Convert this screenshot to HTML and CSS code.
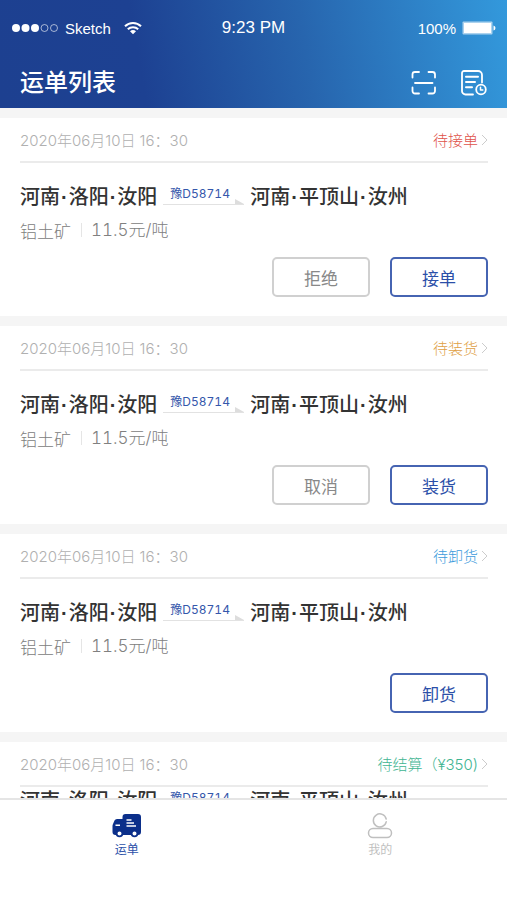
FILE: index.html
```html
<!DOCTYPE html>
<html lang="zh-CN">
<head>
    <meta charset="UTF-8">
    <meta name="viewport" content="width=device-width, initial-scale=1.0">
    <title>运单列表</title>
    <link rel="stylesheet" href="styles.css">
</head>
<body>
    <header class="header">
        <div class="status-bar">
            <div class="status-left">
                <svg class="signal" width="48" height="10" viewBox="0 0 48 10" fill="none" stroke="#fff">
                    <circle cx="5" cy="5" r="4" fill="#fff" stroke="none"/>
                    <circle cx="14.5" cy="5" r="4" fill="#fff" stroke="none"/>
                    <circle cx="24" cy="5" r="4" fill="#fff" stroke="none"/>
                    <circle cx="33.5" cy="5" r="3.5" stroke-opacity=".6"/>
                    <circle cx="43" cy="5" r="3.5" stroke-opacity=".6"/>
                </svg>
                <span>Sketch</span>
                <svg class="wifi" width="18" height="14" viewBox="0 0 18 14" fill="none" stroke="#fff" stroke-width="2">
                    <path d="M1 5.2a11.5 11.5 0 0 1 16 0"/>
                    <path d="M3.8 8.3a7.6 7.6 0 0 1 10.4 0"/>
                    <path d="M9 13.2L6 10.3a4.4 4.4 0 0 1 6 0z" fill="#fff" stroke="none"/>
                </svg>
            </div>
            <div class="status-time">9:23 PM</div>
            <div class="status-right">
                <span>100%</span>
                <svg width="34" height="14" viewBox="0 0 34 14">
                    <rect x=".5" y=".5" width="30" height="13" rx="1" fill="#fff" fill-opacity=".6"/>
                    <rect x="2" y="2" width="27" height="10" fill="#fff"/>
                    <path d="M31.5 4.5q2 .5 2 2.5t-2 2.5z" fill="#fff"/>
                </svg>
            </div>
        </div>
        <div class="title-bar">
            <h1>运单列表</h1>
            <div class="title-actions">
                <button class="icon-button" type="button" aria-label="扫一扫">
                    <svg width="26" height="26" viewBox="0 0 26 26" fill="none" stroke="#fff" stroke-width="1.8" stroke-linecap="round" stroke-linejoin="round">
                        <path d="M1.5 7.5v-3A2.5 2.5 0 0 1 4 2h4M17.5 2h4a2.5 2.5 0 0 1 2.5 2.5v3M24 17.5V21a2.5 2.5 0 0 1-2.5 2.5h-4M8 23.5H4A2.5 2.5 0 0 1 1.5 21v-3.5M4 13h17.5"/>
                    </svg>
                </button>
                <button class="icon-button" type="button" aria-label="历史运单">
                    <svg width="26" height="26" viewBox="0 0 26 26" fill="none" stroke="#fff" stroke-width="1.8" stroke-linecap="round" stroke-linejoin="round">
                        <path d="M12 24.5H4.5A3.5 3.5 0 0 1 1 21V3A2 2 0 0 1 3 1H17A4 4 0 0 1 21 5V12.5"/>
                        <path d="M5 6.8h12M5 12h9M5 17.2h6" stroke-width="2"/>
                        <circle cx="20" cy="19.5" r="4.8"/>
                        <path d="M19.5 17.2v2.8h2.3" stroke-width="1.5"/>
                    </svg>
                </button>
            </div>
        </div>
    </header>

    <main class="order-list">
        <article class="order">
            <div class="order-head">
                <time>2020年06月10日 16：30</time>
                <a class="order-status red" href="#">待接单<svg width="7" height="12" viewBox="0 0 7 12"><path d="M1 1l5 5-5 5"/></svg></a>
            </div>
            <h2 class="route">
                <span>河南<i>·</i>洛阳<i>·</i>汝阳</span>
                <span class="plate">豫D58714<svg width="9" height="5" viewBox="0 0 9 5"><path d="M0 0l9 5H0z"/></svg></span>
                <span>河南<i>·</i>平顶山<i>·</i>汝州</span>
            </h2>
            <p class="goods"><span>铝土矿</span><span class="price">11.5元/吨</span></p>
            <div class="order-actions">
                <button class="btn" type="button">拒绝</button>
                <button class="btn primary" type="button">接单</button>
            </div>
        </article>

        <article class="order">
            <div class="order-head">
                <time>2020年06月10日 16：30</time>
                <a class="order-status orange" href="#">待装货<svg width="7" height="12" viewBox="0 0 7 12"><path d="M1 1l5 5-5 5"/></svg></a>
            </div>
            <h2 class="route">
                <span>河南<i>·</i>洛阳<i>·</i>汝阳</span>
                <span class="plate">豫D58714<svg width="9" height="5" viewBox="0 0 9 5"><path d="M0 0l9 5H0z"/></svg></span>
                <span>河南<i>·</i>平顶山<i>·</i>汝州</span>
            </h2>
            <p class="goods"><span>铝土矿</span><span class="price">11.5元/吨</span></p>
            <div class="order-actions">
                <button class="btn" type="button">取消</button>
                <button class="btn primary" type="button">装货</button>
            </div>
        </article>

        <article class="order">
            <div class="order-head">
                <time>2020年06月10日 16：30</time>
                <a class="order-status blue" href="#">待卸货<svg width="7" height="12" viewBox="0 0 7 12"><path d="M1 1l5 5-5 5"/></svg></a>
            </div>
            <h2 class="route">
                <span>河南<i>·</i>洛阳<i>·</i>汝阳</span>
                <span class="plate">豫D58714<svg width="9" height="5" viewBox="0 0 9 5"><path d="M0 0l9 5H0z"/></svg></span>
                <span>河南<i>·</i>平顶山<i>·</i>汝州</span>
            </h2>
            <p class="goods"><span>铝土矿</span><span class="price">11.5元/吨</span></p>
            <div class="order-actions">
                <button class="btn primary" type="button">卸货</button>
            </div>
        </article>

        <article class="order compact">
            <div class="order-head">
                <time>2020年06月10日 16：30</time>
                <a class="order-status green" href="#">待结算（¥350)<svg width="7" height="12" viewBox="0 0 7 12"><path d="M1 1l5 5-5 5"/></svg></a>
            </div>
            <h2 class="route">
                <span>河南<i>·</i>洛阳<i>·</i>汝阳</span>
                <span class="plate">豫D58714<svg width="9" height="5" viewBox="0 0 9 5"><path d="M0 0l9 5H0z"/></svg></span>
                <span>河南<i>·</i>平顶山<i>·</i>汝州</span>
            </h2>
        </article>
    </main>

    <nav class="tab-bar">
        <a class="tab active" href="#">
            <svg width="30" height="26" viewBox="0 0 30 26">
                <path fill="#0b2f8a" d="M13.5 1H26a3 3 0 0 1 3 3V19a3 3 0 0 1-3 3H3.5A3 3 0 0 1 .5 19V13q0-1 .5-2l1.5-3.5Q3.2 6 5 6H10.5V4a3 3 0 0 1 3-3z"/>
                <g fill="#fff" stroke="#0b2f8a" stroke-width="1.8">
                    <circle cx="7.5" cy="20.5" r="2.9"/>
                    <circle cx="22.5" cy="20.5" r="2.9"/>
                </g>
                <path stroke="#fff" stroke-width="1.6" d="M3.5 12.2h4.5M14.5 7h5M14.5 10h7.5M14.5 13h9.5"/>
            </svg>
            <span>运单</span>
        </a>
        <a class="tab" href="#">
            <svg width="26" height="26" viewBox="0 0 26 26" fill="none" stroke="#bfbfbf" stroke-width="1.5" stroke-linecap="round">
                <path d="M19.2 6a6.5 6.5 0 1 0 0 2.8"/>
                <rect x="1.5" y="15.5" width="23" height="9" rx="4.5"/>
            </svg>
            <span>我的</span>
        </a>
    </nav>
</body>
</html>
```

FILE: styles.css
```css
* {
    margin: 0;
    padding: 0;
    box-sizing: border-box;
}

body {
    height: 100vh;
    display: flex;
    flex-direction: column;
    background: #f5f5f5;
    color: #333;
    font-family: Inter, "Noto Sans CJK SC", sans-serif;
    overflow: hidden;
}

a {
    color: inherit;
    text-decoration: none;
}

button {
    font-family: inherit;
    background: none;
    border: none;
    cursor: pointer;
}

/* header */
.header {
    flex: none;
    background: linear-gradient(80deg, #1d4090 0%, #1d4192 28%, #2765ae 60%, #3399dc 100%);
    color: #fff;
}

.status-bar {
    display: grid;
    grid-template-columns: 1fr auto 1fr;
    align-items: center;
    height: 56px;
    padding: 0 11px;
    font-family: "Liberation Sans", Arial, sans-serif;
    font-size: 15px;
}

.status-left,
.status-right {
    display: flex;
    align-items: center;
    gap: 6px;
}

.wifi {
    margin-left: 7px;
}

.status-time {
    font-size: 17px;
}

.status-right {
    justify-content: flex-end;
}

.title-bar {
    display: flex;
    align-items: center;
    justify-content: space-between;
    height: 52px;
    padding: 2px 20px 0;
}

.title-bar h1 {
    font-size: 24px;
    font-weight: 500;
    line-height: 50px;
}

.title-actions {
    display: flex;
    gap: 24px;
}

.icon-button {
    display: flex;
}

/* orders */
.order-list {
    flex: 1;
    min-height: 0;
    padding-top: 10px;
    overflow: hidden;
}

.order {
    margin-bottom: 10px;
    padding: 0 19px 19px 20px;
    background: #fff;
}

.order-head {
    display: flex;
    align-items: center;
    justify-content: space-between;
    height: 45px;
    border-bottom: 2px solid #ebebeb;
    color: #b0b0b0;
    font-size: 15px;
    font-weight: 300;
}

.order-status {
    display: flex;
    align-items: center;
    gap: 3px;
}

.order-status svg {
    fill: none;
    stroke: #ccc;
}

.red { color: #e0524a; }
.orange { color: #e0a044; }
.blue { color: #3c9bdc; }
.green { color: #3fb592; }

.route {
    display: flex;
    align-items: center;
    gap: 6px;
    height: 28px;
    margin-top: 18px;
    font-size: 20px;
    font-weight: 500;
    white-space: nowrap;
}

.route i {
    margin: 0 1px;
    font-family: "Liberation Sans", Arial, sans-serif;
    font-style: normal;
    font-weight: 700;
}

.plate {
    display: flex;
    align-items: flex-end;
    justify-content: space-between;
    width: 81px;
    height: 20px;
    padding-left: 7px;
    border-bottom: 1px solid #e2e2e2;
    color: #3557ab;
    font-size: 12px;
    font-weight: 400;
    font-variant-numeric: tabular-nums;
    line-height: 20px;
}

.plate svg {
    fill: #ddd;
}

.goods {
    display: flex;
    align-items: center;
    height: 24px;
    margin-top: 9px;
    color: #808080;
    font-size: 17px;
    font-weight: 300;
}

.price {
    margin-left: 10px;
    padding-left: 9px;
    border-left: 1px solid #e5e5e5;
    font-variant-numeric: tabular-nums;
    line-height: 14px;
}

.order-actions {
    display: flex;
    justify-content: flex-end;
    gap: 20px;
    margin-top: 15px;
}

.btn {
    width: 98px;
    height: 40px;
    border: 2px solid #d0d0d0;
    border-radius: 5px;
    color: #888;
    font-size: 17px;
}

.btn.primary {
    border-color: #4664b2;
    color: #2b4fa8;
}

.compact .route {
    height: 24px;
    margin-top: 0;
}

/* bottom tabs */
.tab-bar {
    flex: none;
    display: flex;
    height: 102px;
    border-top: 2px solid #e5e5e5;
    background: #fff;
}

.tab {
    flex: 1;
    display: flex;
    flex-direction: column;
    align-items: center;
    padding-top: 13px;
    color: #bfbfbf;
    font-size: 12px;
    line-height: 18px;
}

.tab svg {
    margin-bottom: 2px;
}

.tab.active {
    color: #2b4fa8;
}
```
